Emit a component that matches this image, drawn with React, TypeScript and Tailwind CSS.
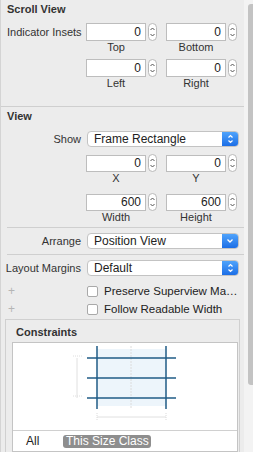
import React from "react";

const font = { fontFamily: '"Liberation Sans", Arial, sans-serif' };

function Stepper() {
  return (
    <div className="ml-[2px] flex h-[18px] w-[9px] flex-col items-center justify-center rounded-full border border-[#b9b9b9] bg-white">
      <svg width="7" height="14" viewBox="0 0 7 14">
        <path d="M1.5 5 L3.5 3 L5.5 5" fill="none" stroke="#555" strokeWidth="1" />
        <path d="M1.5 9 L3.5 11 L5.5 9" fill="none" stroke="#555" strokeWidth="1" />
      </svg>
    </div>
  );
}

function NumField({ value, h = 18 }: { value: string; h?: number }) {
  return (
    <div className="flex items-center">
      <div
        className={`flex w-[60px] items-center justify-end border border-[#bdbdbd] bg-white pr-[4px] text-[12px] leading-[14px] text-[#222] ${h === 18 ? "h-[18px]" : "h-[17px]"}`}
      >
        {value}
      </div>
      <Stepper />
    </div>
  );
}

function FieldPair({ a, b, la, lb, h = 18 }: { a: string; b: string; la: string; lb: string; h?: number }) {
  return (
    <div className="flex gap-[9px] pl-[85px]">
      <div className="flex flex-col">
        <NumField value={a} h={h} />
        <div className="w-[60px] text-center text-[11px] leading-[12px] text-[#333]">{la}</div>
      </div>
      <div className="flex flex-col">
        <NumField value={b} h={h} />
        <div className="w-[60px] text-center text-[11px] leading-[12px] text-[#333]">{lb}</div>
      </div>
    </div>
  );
}

function Popup({ text, single }: { text: string; single?: boolean }) {
  return (
    <div className="flex h-[16px] w-[152px] items-stretch overflow-hidden rounded-[4px] border border-[#c3c3c3] bg-white">
      <div className="flex flex-1 items-center pl-[6px] text-[12px] leading-[14px] text-[#222]">{text}</div>
      <div className="flex w-[16px] items-center justify-center bg-gradient-to-b from-[#4fa3fb] to-[#1c6ee6]">
        {single ? (
          <svg width="8" height="6" viewBox="0 0 8 6">
            <path d="M1.5 1.5 L4 4 L6.5 1.5" fill="none" stroke="#fff" strokeWidth="1.3" />
          </svg>
        ) : (
          <svg width="7" height="12" viewBox="0 0 7 12">
            <path d="M1.5 4.5 L3.5 2.5 L5.5 4.5" fill="none" stroke="#fff" strokeWidth="1.2" />
            <path d="M1.5 7.5 L3.5 9.5 L5.5 7.5" fill="none" stroke="#fff" strokeWidth="1.2" />
          </svg>
        )}
      </div>
    </div>
  );
}

function LabelRow({ label, children }: { label: string; children: React.ReactNode }) {
  return (
    <div className="flex h-[16px] items-center">
      <div className="w-[80px] text-right text-[11px] leading-[14px] text-[#333]">{label}</div>
      <div className="ml-[6px]">{children}</div>
    </div>
  );
}

function CheckRow({ text }: { text: string }) {
  return (
    <div className="flex h-[18px] items-center">
      <div className="w-[86px] pl-[7px] text-[12px] leading-[12px] text-[#b5b5b5]">+</div>
      <div className="h-[11px] w-[11px] rounded-[2px] border border-[#a9a9a9] bg-white" />
      <div className="ml-[6px] w-[134px] truncate text-[11.5px] leading-[14px] text-[#222]">{text}</div>
    </div>
  );
}

function Divider() {
  return <div className="h-px w-full bg-[#cfcfcf]" />;
}

function Diagram() {
  return (
    <svg width="222" height="87" viewBox="0 0 222 87">
      <rect x="84" y="6" width="69" height="57" fill="#edf5fb" />
      <line x1="118" y1="3" x2="118" y2="66" stroke="#dcdcdc" strokeWidth="1" strokeDasharray="2 1" />
      <line x1="64" y1="15" x2="64" y2="55" stroke="#e0e0e0" strokeWidth="1" />
      <line x1="60" y1="13" x2="70" y2="13" stroke="#dedede" strokeWidth="1" strokeDasharray="1 1" />
      <line x1="60" y1="53" x2="70" y2="53" stroke="#dedede" strokeWidth="1" strokeDasharray="1 1" />
      <line x1="84" y1="74" x2="153" y2="74" stroke="#e0e0e0" strokeWidth="1" />
      <line x1="84" y1="70" x2="84" y2="78" stroke="#dadada" strokeWidth="1" strokeDasharray="1 1" />
      <line x1="153" y1="70" x2="153" y2="78" stroke="#dadada" strokeWidth="1" strokeDasharray="1 1" />
      <line x1="74" y1="15" x2="163" y2="15" stroke="#1f5b86" strokeWidth="1.5" />
      <line x1="74" y1="35" x2="163" y2="35" stroke="#1f5b86" strokeWidth="1.5" />
      <line x1="74" y1="55" x2="163" y2="55" stroke="#1f5b86" strokeWidth="1.5" />
      <line x1="84" y1="3" x2="84" y2="66" stroke="#1f5b86" strokeWidth="1.5" />
      <line x1="153" y1="3" x2="153" y2="66" stroke="#1f5b86" strokeWidth="1.5" />
    </svg>
  );
}

export default function App() {
  return (
    <div style={font} className="flex h-[452px] w-[253px] overflow-hidden border-l border-[#d4d4d4] bg-[#ececec]">
      <div className="flex w-[243px] flex-col">
        {/* Scroll View */}
        <div className="pl-[6px] pt-[3px] text-[11px] font-bold leading-[13px] text-[#333]">Scroll View</div>
        <div className="relative mt-[7px]">
          <div className="absolute left-[6px] top-[2px] text-[11px] leading-[14px] text-[#333]">Indicator Insets</div>
          <FieldPair a="0" b="0" la="Top" lb="Bottom" />
        </div>
        <div className="mt-[6px]">
          <FieldPair a="0" b="0" la="Left" lb="Right" />
        </div>
        <div className="mt-[17px]">
          <Divider />
        </div>

        {/* View */}
        <div className="pl-[6px] pt-[3px] text-[11px] font-bold leading-[13px] text-[#333]">View</div>
        <div className="mt-[8px]">
          <LabelRow label="Show">
            <Popup text="Frame Rectangle" />
          </LabelRow>
        </div>
        <div className="mt-[7px]">
          <FieldPair a="0" b="0" la="X" lb="Y" h={17} />
        </div>
        <div className="mt-[9px]">
          <FieldPair a="600" b="600" la="Width" lb="Height" h={17} />
        </div>
        <div className="mt-[4px] pl-[6px]">
          <Divider />
        </div>
        <div className="mt-[5px]">
          <LabelRow label="Arrange">
            <Popup text="Position View" single />
          </LabelRow>
        </div>
        <div className="mt-[5px] pl-[6px]">
          <Divider />
        </div>
        <div className="mt-[5px]">
          <LabelRow label="Layout Margins">
            <Popup text="Default" />
          </LabelRow>
        </div>
        <div className="mt-[6px]">
          <CheckRow text="Preserve Superview Margins" />
          <CheckRow text="Follow Readable Width" />
        </div>

        {/* Constraints */}
        <div className="mt-[1px] ml-[4px] mr-[4px] flex flex-1 flex-col border-l border-r border-t border-[#d0d0d0]">
          <div className="pl-[10px] pt-[6px] text-[11px] font-bold leading-[13px] text-[#333]">Constraints</div>
          <div className="ml-[6px] mr-[1px] mt-[3px] flex flex-1 flex-col border border-[#c4c4c4] bg-white">
            <div className="h-[87px]">
              <Diagram />
            </div>
            <div className="h-px bg-[#d0d0d0]" />
            <div className="flex items-center pt-[4px]">
              <div className="ml-[13px] text-[12px] leading-[13px] text-[#222]">All</div>
              <div className="ml-[24px] flex h-[13px] w-[88px] items-center justify-center rounded-[3px] bg-[#8e8e8e] text-[12px] leading-[13px] text-white">
                This Size Class
              </div>
            </div>
          </div>
        </div>
      </div>
      <div className="flex w-[9px] justify-end bg-[#f3f3f3] pt-[4px]">
        <div className="h-[381px] w-[5px] rounded-l-[3px] bg-[#c3c3c3]" />
      </div>
    </div>
  );
}
